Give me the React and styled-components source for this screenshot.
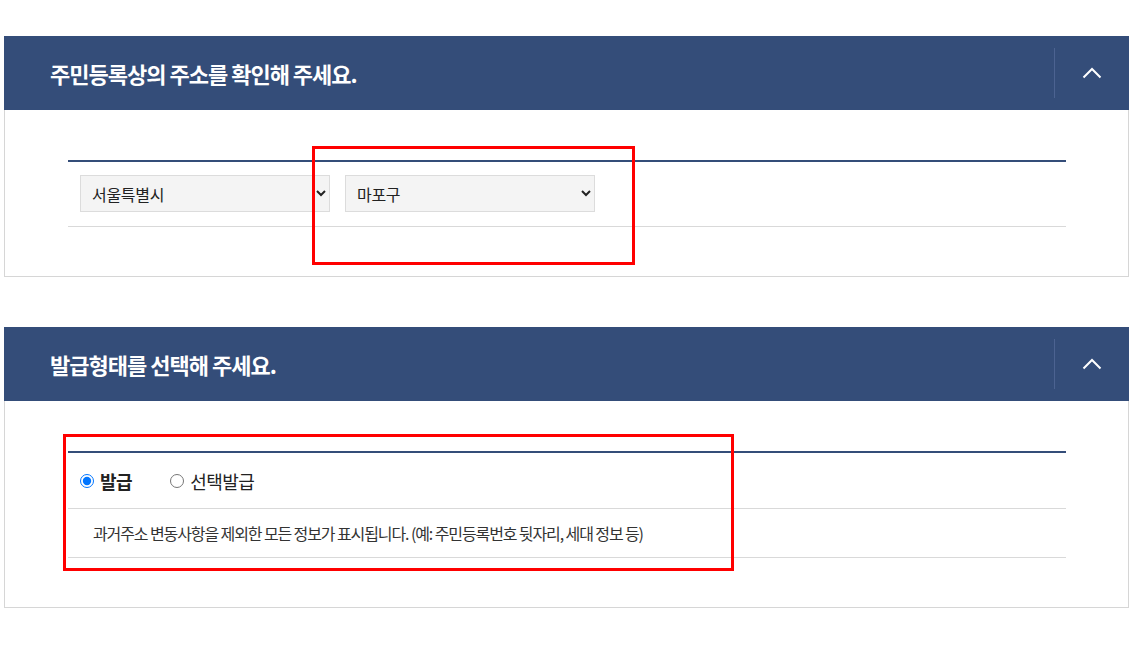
import React, { useState } from "react";
import styled, { createGlobalStyle } from "styled-components";

const GlobalStyle = createGlobalStyle`
  body {
    margin: 0;
    background: #fff;
    font-family: "Noto Sans CJK KR", "Noto Sans", sans-serif;
    color: #222;
  }
`;

const Page = styled.div`
  position: relative;
  padding: 36px 0 40px 4px;
  display: flex;
  flex-direction: column;
  gap: 50px;
`;

const Panel = styled.section`
  width: 1125px;
`;

const Header = styled.div`
  height: 74px;
  background: #344d79;
  display: flex;
  align-items: stretch;
`;

const Title = styled.h2`
  flex: 1;
  margin: 0;
  padding-left: 46px;
  display: flex;
  align-items: center;
  color: #fff;
  font-size: 22px;
  font-weight: 700;
  letter-spacing: -1px;
`;

const Divider = styled.div`
  width: 1px;
  margin: 12px 0;
  background: #4c6391;
`;

const Toggle = styled.button`
  width: 74px;
  border: 0;
  background: transparent;
  display: flex;
  align-items: center;
  justify-content: center;
  cursor: pointer;
  padding: 0;
`;

const Body = styled.div`
  border: 1px solid #d6d6d6;
  border-top: 0;
  padding: 50px 62px 49px 63px;
`;

const Table = styled.div`
  border-top: 2px solid #344d79;
`;

const Row = styled.div`
  display: flex;
  align-items: center;
  gap: 15px;
  border-bottom: 1px solid #d9d9d9;
  padding: ${(p) => p.$pad || "0 12px"};
  height: ${(p) => p.$h || "auto"};
`;

const Select = styled.select`
  width: 250px;
  height: 37px;
  padding: 0 6px 0 7px;
  background: #f4f4f4;
  border: 1px solid #dcdcdc;
  border-radius: 0;
  font-family: "Noto Sans CJK KR", sans-serif;
  font-size: 16px;
  letter-spacing: -0.3px;
  color: #222;
  outline: none;
`;

const RadioLabel = styled.label`
  display: flex;
  align-items: center;
  gap: 6px;
  margin-right: 23px;
  font-size: 18px;
  letter-spacing: -0.5px;
  font-weight: ${(p) => (p.$on ? 700 : 400)};
  color: #222;
  cursor: pointer;

  input {
    margin: 0;
    width: 14px;
    height: 14px;
  }
`;

const Desc = styled.p`
  margin: 0;
  padding-left: 13px;
  font-size: 16px;
  letter-spacing: -1.1px;
  color: #333;
`;

const Mark = styled.div`
  position: absolute;
  border: 3px solid #ff0000;
  pointer-events: none;
`;

const Chevron = () => (
  <svg width="20" height="12" viewBox="0 0 20 12" fill="none">
    <path d="M1.5 10.5 L10 2 L18.5 10.5" stroke="#fff" strokeWidth="2" />
  </svg>
);

function Section({ title, children }) {
  return (
    <Panel>
      <Header>
        <Title>{title}</Title>
        <Divider />
        <Toggle aria-label="접기">
          <Chevron />
        </Toggle>
      </Header>
      <Body>
        <Table>{children}</Table>
      </Body>
    </Panel>
  );
}

export default function App() {
  const [type, setType] = useState("full");

  return (
    <Page>
      <GlobalStyle />
      <Section title="주민등록상의 주소를 확인해 주세요.">
        <Row $pad="13px 12px 14px">
          <Select defaultValue="seoul">
            <option value="seoul">서울특별시</option>
            <option value="busan">부산광역시</option>
          </Select>
          <Select defaultValue="mapo">
            <option value="mapo">마포구</option>
            <option value="jongno">종로구</option>
          </Select>
        </Row>
      </Section>

      <Section title="발급형태를 선택해 주세요.">
        <Row $h="55px">
          <RadioLabel $on={type === "full"}>
            <input
              type="radio"
              name="type"
              checked={type === "full"}
              onChange={() => setType("full")}
            />
            발급
          </RadioLabel>
          <RadioLabel $on={type === "partial"}>
            <input
              type="radio"
              name="type"
              checked={type === "partial"}
              onChange={() => setType("partial")}
            />
            선택발급
          </RadioLabel>
        </Row>
        <Row $h="48px">
          <Desc>
            과거주소 변동사항을 제외한 모든 정보가 표시됩니다. (예: 주민등록번호 뒷자리, 세대 정보 등)
          </Desc>
        </Row>
      </Section>

      <Mark style={{ left: 312, top: 146, width: 317, height: 113 }} />
      <Mark style={{ left: 63, top: 434, width: 665, height: 131 }} />
    </Page>
  );
}
